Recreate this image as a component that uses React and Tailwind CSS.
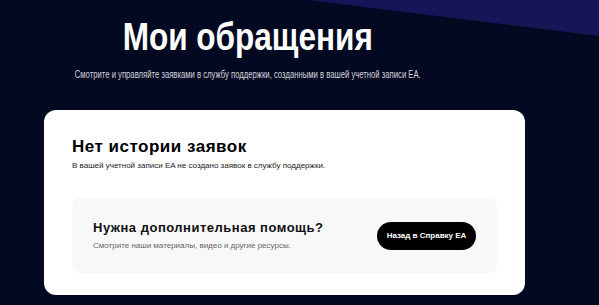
const App = () => {
  return (
    <div
      className="relative w-[599px] h-[305px] overflow-hidden bg-[#030920]"
      style={{ fontFamily: '"Liberation Sans", Arial, sans-serif' }}
    >
      {/* diagonal band in the top right corner */}
      <svg className="absolute left-0 top-0" width="599" height="305">
        <polygon points="308,0 599,0 599,36" fill="#141657" />
      </svg>

      <div className="relative flex flex-col">
        <div className="w-[496px] flex flex-col items-center">
          <h1 className="mt-[18px] text-[38px] leading-[38px] font-bold text-white whitespace-nowrap scale-x-[0.83]">
            Мои обращения
          </h1>
          <p className="mt-[13px] text-[10px] leading-[12px] text-[#d4d4dc] whitespace-nowrap scale-x-[0.77]">
            Смотрите и управляйте заявками в службу поддержки, созданными в вашей учетной записи EA.
          </p>
        </div>

        <div className="mt-[29px] ml-[44px] w-[481px] h-[185px] bg-white rounded-[12px] px-[28px] pt-[27px]">
          <h2 className="text-[17px] leading-[20px] font-bold text-black tracking-[0.5px]">
            Нет истории заявок
          </h2>
          <p className="mt-[4px] text-[8px] leading-[10px] text-[#222]">
            В вашей учетной записи EA не создано заявок в службу поддержки.
          </p>

          <div className="mt-[27px] w-[425px] h-[75px] bg-[#f8f8f8] rounded-[8px] flex items-center justify-between pl-[21px] pr-[21px]">
            <div className="flex flex-col">
              <span className="text-[13px] leading-[16px] font-bold text-[#111] tracking-[0.5px] whitespace-nowrap">
                Нужна дополнительная помощь?
              </span>
              <span className="mt-[5px] text-[8px] leading-[10px] text-[#666] whitespace-nowrap">
                Смотрите наши материалы, видео и другие ресурсы.
              </span>
            </div>
            <button className="w-[99px] h-[28px] rounded-full bg-black text-white text-[8px] font-bold whitespace-nowrap">
              Назад в Справку EA
            </button>
          </div>
        </div>
      </div>
    </div>
  );
};

export default App;
